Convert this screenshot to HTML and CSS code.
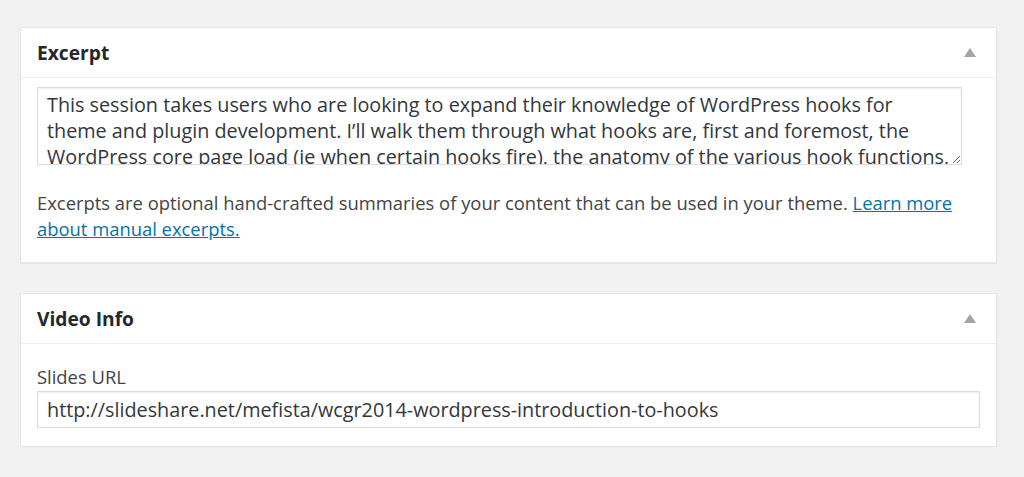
FILE: index.html
```html
<!DOCTYPE html>
<html>
<head>
<meta charset="utf-8">
<link rel="stylesheet" href="styles.css">
</head>
<body>
<div class="page">
  <section class="postbox">
    <header class="hndle">
      <h2>Excerpt</h2>
      <span class="toggle"></span>
    </header>
    <div class="inside excerpt">
      <textarea class="excerpt-area" rows="3">This session takes users who are looking to expand their knowledge of WordPress hooks for theme and plugin development. I’ll walk them through what hooks are, first and foremost, the WordPress core page load (ie when certain hooks fire), the anatomy of the various hook functions, and how to use them.</textarea>
      <p class="desc">Excerpts are optional hand-crafted summaries of your content that can be used in your theme. <a href="#">Learn more about manual excerpts.</a></p>
    </div>
  </section>
  <section class="postbox">
    <header class="hndle">
      <h2>Video Info</h2>
      <span class="toggle"></span>
    </header>
    <div class="inside video">
      <label class="field-label">Slides URL</label>
      <input class="url-input" type="text" value="http://slideshare.net/mefista/wcgr2014-wordpress-introduction-to-hooks">
    </div>
  </section>
</div>
</body>
</html>
```

FILE: styles.css
```css
html, body {
  margin: 0;
  padding: 0;
  background: #f1f1f1;
}
body {
  font-family: "Open Sans", "Liberation Sans", sans-serif;
  color: #444;
}
.page {
  padding: 27px 0 0 20px;
  width: 977px;
  display: flex;
  flex-direction: column;
  gap: 30px;
}
.postbox {
  background: #fff;
  border: 1px solid #e5e5e5;
  box-shadow: 0 1px 1px rgba(0,0,0,0.04);
}
.hndle {
  height: 49px;
  border-bottom: 1px solid #eee;
  display: flex;
  align-items: center;
  justify-content: space-between;
  padding: 0 20px 0 16px;
}
.hndle h2 {
  margin: 0;
  font-size: 19.2px;
  font-weight: 700;
  color: #23282d;
  line-height: 24px;
}
.toggle {
  width: 0;
  height: 0;
  border-left: 6px solid transparent;
  border-right: 6px solid transparent;
  border-bottom: 9px solid #a0a5aa;
}
.inside {
  padding: 9px 16px 20px 16px;
}
.excerpt-area {
  display: block;
  box-sizing: border-box;
  width: 925px;
  height: 78px;
  margin: 0;
  padding: 4px 9px;
  border: 1px solid #ddd;
  box-shadow: inset 0 1px 2px rgba(0,0,0,0.07);
  font-family: "Open Sans", "Liberation Sans", sans-serif;
  font-size: 19.8px;
  line-height: 26px;
  color: #32373c;
  resize: vertical;
  overflow: hidden;
  outline: none;
}
.desc {
  margin: 25px 0 0 0;
  font-size: 18.4px;
  line-height: 26px;
  color: #444;
}
.desc a {
  color: #0073aa;
  text-decoration: underline;
}
.video {
  padding-top: 20px;
  padding-bottom: 18px;
}
.field-label {
  display: block;
  font-size: 18.4px;
  line-height: 26px;
  color: #444;
  margin-bottom: 1px;
}
.url-input {
  display: block;
  box-sizing: border-box;
  width: 943px;
  height: 37px;
  margin: 0;
  padding: 0 9px;
  border: 1px solid #ddd;
  box-shadow: inset 0 1px 2px rgba(0,0,0,0.07);
  font-family: "Open Sans", "Liberation Sans", sans-serif;
  font-size: 19.8px;
  color: #32373c;
  outline: none;
}
```
